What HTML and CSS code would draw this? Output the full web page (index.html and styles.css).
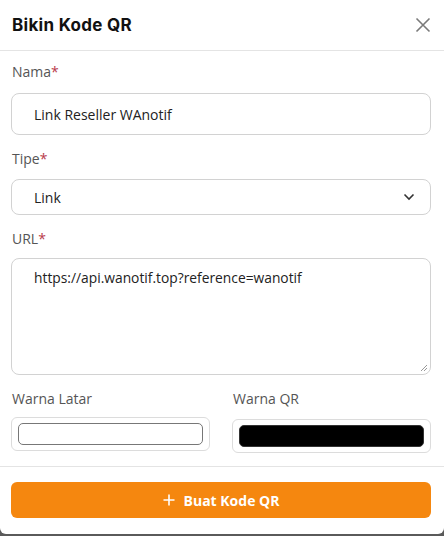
FILE: index.html
```html
<!DOCTYPE html>
<html lang="id">
<head>
    <meta charset="UTF-8">
    <meta name="viewport" content="width=device-width, initial-scale=1.0">
    <title>Bikin Kode QR</title>
    <link rel="stylesheet" href="styles.css">
</head>
<body>

    <div class="modal">
        <!-- Header -->
        <div class="modal-header">
            <h2 class="modal-title">Bikin Kode QR</h2>
            <button class="close-btn" aria-label="Tutup">
                <svg width="16" height="16" viewBox="0 0 16 16"><path d="M1.5 1.5 L14.5 14.5 M14.5 1.5 L1.5 14.5" stroke="#7a7a7a" stroke-width="1.6" fill="none"/></svg>
            </button>
        </div>

        <!-- Form -->
        <div class="modal-body">
            <div class="field">
                <label class="label">Nama<span class="req">*</span></label>
                <div class="input">Link Reseller WAnotif</div>
            </div>
            <div class="field">
                <label class="label">Tipe<span class="req">*</span></label>
                <div class="input select">
                    <span>Link</span>
                    <svg width="12" height="8" viewBox="0 0 12 8"><path d="M1.5 1.5 L6 6 L10.5 1.5" stroke="#333" stroke-width="1.6" fill="none"/></svg>
                </div>
            </div>
            <div class="field">
                <label class="label url-label">URL<span class="req">*</span></label>
                <div class="input textarea">
                    https://api.wanotif.top?reference=wanotif
                    <svg class="grip" width="8" height="8" viewBox="0 0 8 8"><path d="M7 1 L1 7 M7 4 L4 7" stroke="#999" stroke-width="1" fill="none"/></svg>
                </div>
            </div>
            <div class="colors">
                <div class="field">
                    <label class="label">Warna Latar</label>
                    <div class="color-box"><div class="swatch light"></div></div>
                </div>
                <div class="field">
                    <label class="label">Warna QR</label>
                    <div class="color-box"><div class="swatch dark"></div></div>
                </div>
            </div>
        </div>

        <!-- Footer -->
        <div class="modal-footer">
            <button class="btn">
                <svg width="12" height="12" viewBox="0 0 12 12"><path d="M6 0.5 V11.5 M0.5 6 H11.5" stroke="#fff" stroke-width="1.6" fill="none"/></svg>
                Buat Kode QR
            </button>
        </div>
    </div>

</body>
</html>
```

FILE: styles.css
```css
body {
    margin: 0;
    padding: 0;
    background: #5a5a5a;
    font-family: "Open Sans", Arial, sans-serif;
    color: #222;
}

.modal {
    width: 444px;
    height: 534px;
    background: white;
    border-radius: 0 0 6px 6px;
    display: flex;
    flex-direction: column;
}

/* Header */
.modal-header {
    height: 50px;
    border-bottom: 1px solid #e4e4e4;
    display: flex;
    align-items: center;
    justify-content: space-between;
    padding: 0 12px;
}
.modal-title {
    margin: 0;
    font-family: Inter, sans-serif;
    font-size: 17px;
    font-weight: 700;
    letter-spacing: 0.3px;
    color: #111;
}
.close-btn {
    background: none;
    border: none;
    padding: 0;
    margin-right: 1px;
    display: flex;
}

/* Form */
.modal-body {
    padding: 11px 13px 0 11px;
}
.field {
    margin-bottom: 14px;
}
.label {
    display: block;
    font-size: 14px;
    line-height: 20px;
    color: #555;
    margin-bottom: 11px;
    padding-left: 1px;
}
.req {
    color: #b83a4b;
}
.input {
    height: 40px;
    border: 1px solid #d2d2d2;
    border-radius: 8px;
    padding: 0 22px;
    font-size: 14px;
    display: flex;
    align-items: center;
    color: #222;
}
.select {
    height: 34px;
    justify-content: space-between;
    padding-right: 15px;
}
.field:nth-child(2) .label {
    margin-bottom: 10px;
}
.label.url-label {
    margin-bottom: 9px;
}
.textarea {
    height: 117px;
    align-items: flex-start;
    padding-top: 9px;
    position: relative;
    box-sizing: border-box;
    font-size: 13.8px;
}
.grip {
    position: absolute;
    right: 2px;
    bottom: 2px;
}

/* Warna */
.colors {
    display: grid;
    grid-template-columns: 1fr 1fr;
    gap: 22px;
    margin-top: 5px;
}
.colors .field {
    margin-bottom: 13px;
}
.colors .label {
    margin-bottom: 8px;
}
.color-box {
    border: 1px solid #dcdcdc;
    border-radius: 6px;
    padding: 5px 6px;
    box-sizing: border-box;
    height: 34px;
}
.swatch {
    height: 100%;
    border-radius: 5px;
    box-sizing: border-box;
}
.swatch.light {
    border: 1px solid #777;
    background: white;
}
.swatch.dark {
    background: #000;
    border: 1px solid #333;
}

/* Footer */
.modal-footer {
    border-top: 1px solid #e4e4e4;
    padding: 15px 13px 15px 11px;
}
.btn {
    width: 100%;
    height: 36px;
    border: none;
    border-radius: 6px;
    background: #f5870f;
    color: white;
    font-family: "Open Sans", Arial, sans-serif;
    font-size: 14px;
    font-weight: 700;
    display: flex;
    align-items: center;
    justify-content: center;
    gap: 9px;
}
```
